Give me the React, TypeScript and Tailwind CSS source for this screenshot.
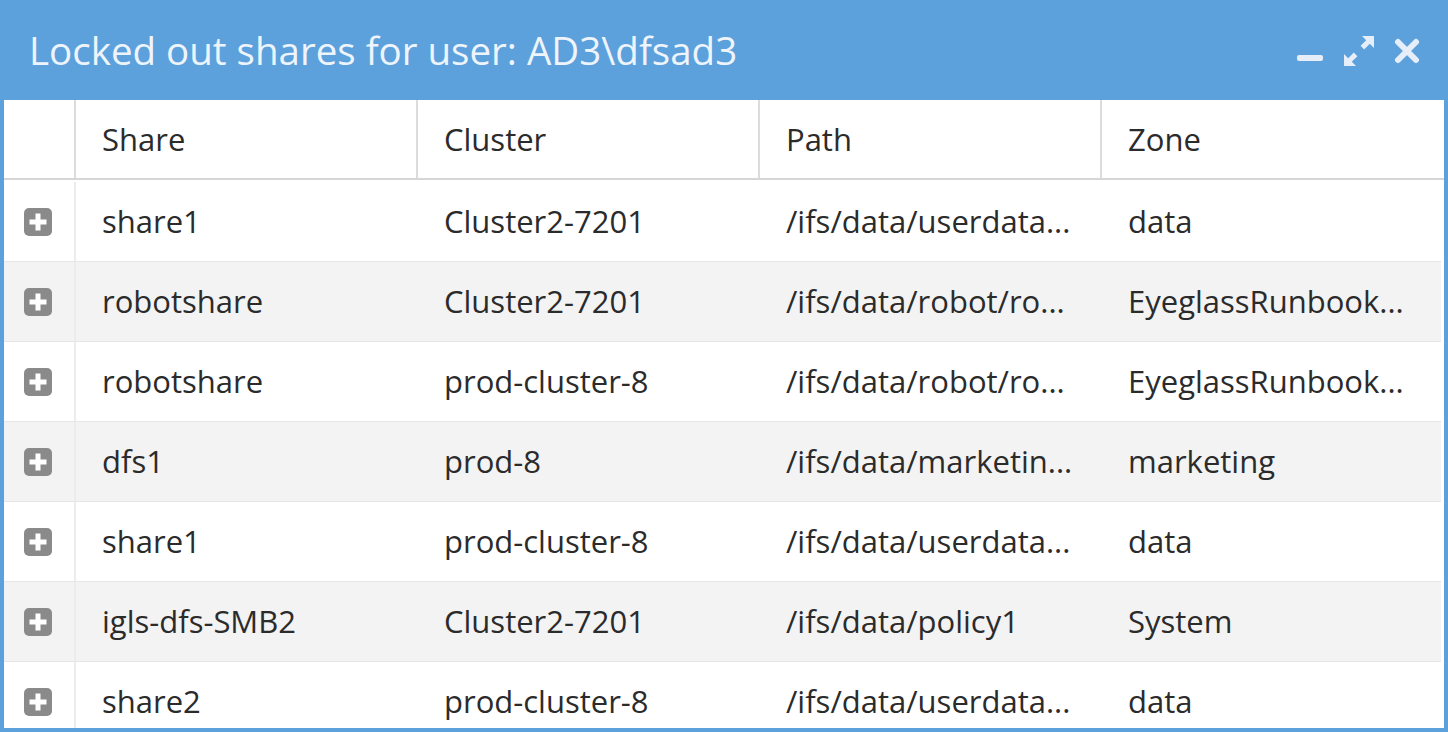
import React from 'react';

interface LockedShare {
  share: string;
  cluster: string;
  path: string;
  zone: string;
}

const rows: LockedShare[] = [
  { share: 'share1', cluster: 'Cluster2-7201', path: '/ifs/data/userdata...', zone: 'data' },
  { share: 'robotshare', cluster: 'Cluster2-7201', path: '/ifs/data/robot/ro...', zone: 'EyeglassRunbook...' },
  { share: 'robotshare', cluster: 'prod-cluster-8', path: '/ifs/data/robot/ro...', zone: 'EyeglassRunbook...' },
  { share: 'dfs1', cluster: 'prod-8', path: '/ifs/data/marketin...', zone: 'marketing' },
  { share: 'share1', cluster: 'prod-cluster-8', path: '/ifs/data/userdata...', zone: 'data' },
  { share: 'igls-dfs-SMB2', cluster: 'Cluster2-7201', path: '/ifs/data/policy1', zone: 'System' },
  { share: 'share2', cluster: 'prod-cluster-8', path: '/ifs/data/userdata...', zone: 'data' },
];

const columns = ['Share', 'Cluster', 'Path', 'Zone'];

const PlusBox = () => (
  <svg width="30" height="30" viewBox="0 0 30 30">
    <rect x="1" y="1" width="28" height="28" rx="5" fill="#8a8a8a" />
    <path d="M15 6.5v17M6.5 15h17" stroke="#fff" strokeWidth="5" strokeLinecap="butt" />
  </svg>
);

const WindowControls = () => (
  <div className="flex items-center gap-[18px] pr-[28px] pt-[2px]">
    <svg width="28" height="10" viewBox="0 0 28 10" className="mt-[14px]">
      <rect x="1" y="2" width="26" height="6" rx="2" fill="#e6eef9" />
    </svg>
    <svg width="34" height="34" viewBox="0 0 34 34" fill="#e6eef9">
      <path d="M20 2h12v12l-4.2-4.2-5.6 5.6-3.6-3.6 5.6-5.6z" />
      <path d="M14 32H2V20l4.2 4.2 5.6-5.6 3.6 3.6-5.6 5.6z" />
    </svg>
    <svg width="26" height="26" viewBox="0 0 26 26">
      <path d="M4 4l18 18M22 4L4 22" stroke="#e6eef9" strokeWidth="6" strokeLinecap="round" />
    </svg>
  </div>
);

export default function App() {
  return (
    <div
      className="w-[1448px] h-[732px] bg-[#5ca1dc] flex flex-col overflow-hidden"
      style={{ fontFamily: '"Open Sans", "Noto Sans", sans-serif' }}
    >
      {/* title bar */}
      <div className="h-[100px] shrink-0 flex items-center justify-between">
        <h1 className="pl-[29px] pt-[2px] text-[38.5px] text-[#eef4fb]">
          Locked out shares for user: AD3\dfsad3
        </h1>
        <WindowControls />
      </div>

      <div className="mx-[4px] h-[628px] bg-white overflow-hidden text-[#2b2b2b] text-[31px]">
        {/* header */}
        <div className="grid grid-cols-[72px_repeat(4,342px)] h-[80px] border-b-[2px] border-[#d6d6d6]">
          <div className="border-r-[2px] border-[#dcdcdc]" />
          {columns.map((c, i) => (
            <div
              key={c}
              className={
                i < 3
                  ? 'flex items-center pl-[26px] border-r-[2px] border-[#dcdcdc]'
                  : 'flex items-center pl-[26px]'
              }
            >
              {c}
            </div>
          ))}
        </div>

        {/* body */}
        <div className="pt-[2px]">
          {rows.map((r, i) => (
            <div
              key={i}
              className={
                i % 2 === 1
                  ? 'grid grid-cols-[72px_repeat(4,342px)] h-[80px] bg-[#f3f3f3] border-b border-[#e6e6e6] mr-[3px]'
                  : 'grid grid-cols-[72px_repeat(4,342px)] h-[80px] bg-white border-b border-[#e6e6e6] mr-[3px]'
              }
            >
              <div className="flex items-center pl-[19px] border-r-[2px] border-[#ececec]">
                <PlusBox />
              </div>
              <div className="flex items-center pl-[26px] whitespace-nowrap">{r.share}</div>
              <div className="flex items-center pl-[26px] whitespace-nowrap">{r.cluster}</div>
              <div className="flex items-center pl-[26px] whitespace-nowrap">{r.path}</div>
              <div className="flex items-center pl-[26px] whitespace-nowrap">{r.zone}</div>
            </div>
          ))}
        </div>
      </div>
    </div>
  );
}
